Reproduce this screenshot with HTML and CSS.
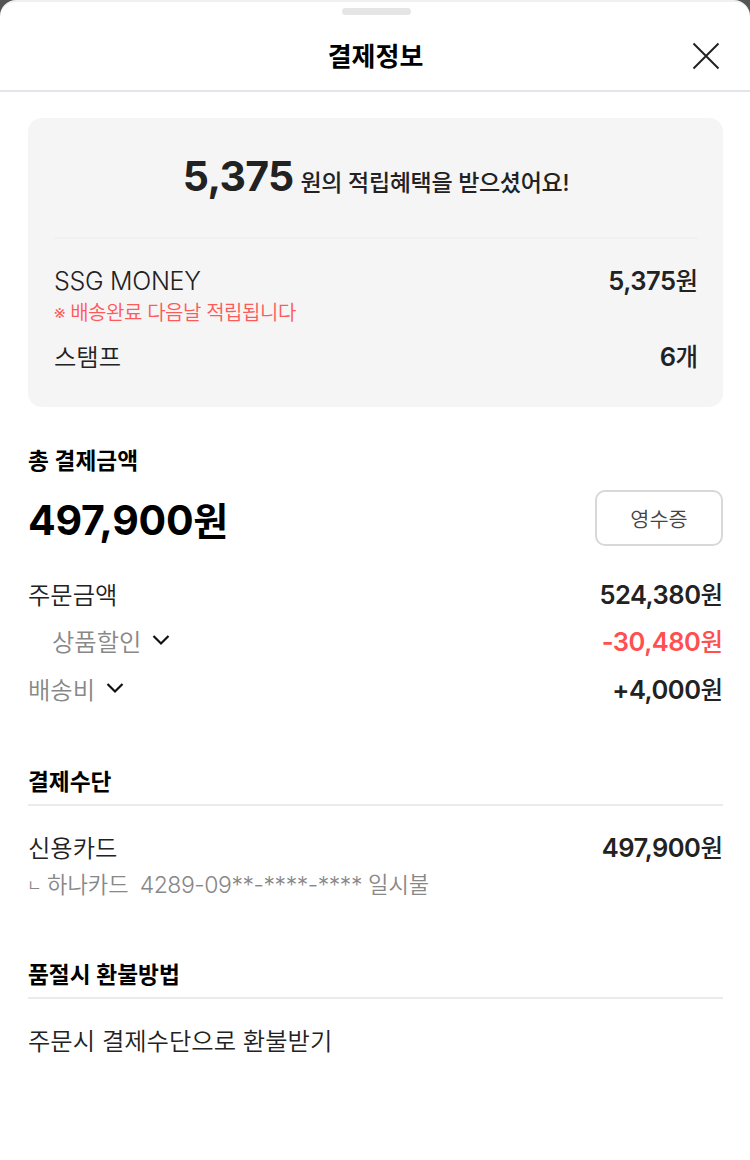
FILE: index.html
```html
<!DOCTYPE html>
<html lang="ko">
<head>
    <meta charset="UTF-8">
    <meta name="viewport" content="width=device-width, initial-scale=1.0">
    <title>결제정보</title>
    <link rel="stylesheet" href="styles.css">
</head>
<body>

<div class="sheet">
    <header class="sheet-header">
        <div class="handle"></div>
        <h1>결제정보</h1>
        <button type="button" class="close" aria-label="닫기">
            <svg width="28" height="28" viewBox="0 0 28 28" fill="none" stroke="#222" stroke-width="2">
                <path d="M1.5 1.5 26.5 26.5M26.5 1.5 1.5 26.5"/>
            </svg>
        </button>
    </header>

    <main>
        <section class="benefit">
            <p class="benefit-title"><strong>5,375</strong><span>원의 적립혜택을 받으셨어요!</span></p>
            <div class="row">
                <span class="latin">SSG MONEY</span>
                <span class="price">5,375<span class="unit">원</span></span>
            </div>
            <p class="note">※ 배송완료 다음날 적립됩니다</p>
            <div class="row">
                <span>스탬프</span>
                <span class="price">6<span class="unit">개</span></span>
            </div>
        </section>

        <section class="total">
            <h2>총 결제금액</h2>
            <div class="total-line">
                <p class="total-price">497,900<span class="unit">원</span></p>
                <button type="button" class="receipt">영수증</button>
            </div>
            <div class="row">
                <span>주문금액</span>
                <span class="price">524,380<span class="unit">원</span></span>
            </div>
            <div class="row sub indent">
                <span>상품할인
                    <svg class="arrow" width="18" height="12" viewBox="0 0 18 12" fill="none" stroke="#111" stroke-width="2.2"><path d="M1.5 2 9 9.5 16.5 2"/></svg>
                </span>
                <span class="price minus">-30,480<span class="unit">원</span></span>
            </div>
            <div class="row sub delivery">
                <span>배송비
                    <svg class="arrow" width="18" height="12" viewBox="0 0 18 12" fill="none" stroke="#111" stroke-width="2.2"><path d="M1.5 2 9 9.5 16.5 2"/></svg>
                </span>
                <span class="price">+4,000<span class="unit">원</span></span>
            </div>
        </section>

        <section class="method">
            <h2>결제수단</h2>
            <div class="row">
                <span>신용카드</span>
                <span class="price">497,900<span class="unit">원</span></span>
            </div>
            <p class="card-info"><span class="branch">ㄴ</span><span>하나카드</span><span class="card-no">4289-09**-****-****</span><span>일시불</span></p>
        </section>

        <section class="refund">
            <h2>품절시 환불방법</h2>
            <div class="row"><span>주문시 결제수단으로 환불받기</span></div>
        </section>
    </main>
</div>

</body>
</html>
```
FILE: styles.css
```css
* {
    box-sizing: border-box;
}
body, h1, h2, p {
    margin: 0;
}
body {
    background: #555;
    color: #222;
    font-family: "Inter", "Noto Sans CJK KR", sans-serif;
    font-size: 24px;
}
button {
    padding: 0;
    background: none;
    border: none;
    font-family: inherit;
}
.sheet {
    height: 1160px;
    background: #fff;
    border-top: 2px solid #f0f0f0;
    border-radius: 16px 16px 0 0;
    overflow: hidden;
}
.sheet-header {
    position: relative;
    height: 90px;
    padding-top: 6px;
    border-bottom: 2px solid #e2e5e9;
}
.handle {
    width: 69px;
    height: 7px;
    margin: 0 auto;
    border-radius: 4px;
    background: #e5e5e5;
    transform: translateX(1px);
}
h1 {
    margin-top: 22px;
    padding-left: 1px;
    color: #000;
    font-size: 26px;
    font-weight: 600;
    line-height: 40px;
    text-align: center;
}
.close {
    position: absolute;
    top: 40px;
    right: 30px;
    width: 28px;
    height: 28px;
}
.close svg {
    display: block;
}
main {
    padding: 26px 27px 0 28px;
}
.row {
    display: flex;
    justify-content: space-between;
    height: 36px;
    font-size: 24.3px;
    font-weight: 350;
    line-height: 36px;
    white-space: nowrap;
}
.latin {
    font-size: 25px;
    font-weight: 300;
    letter-spacing: -0.3px;
}
.price {
    font-size: 25.5px;
    font-weight: 600;
    letter-spacing: -0.5px;
}
.price .unit {
    font-size: 24.5px;
    font-weight: 500;
    letter-spacing: 0;
}
.minus {
    color: #ff4f4f;
}

/* 적립 혜택 */
.benefit {
    height: 289px;
    padding: 0 25px 0 26px;
    border-radius: 14px;
    background: #f5f5f5;
}
.benefit-title {
    display: flex;
    justify-content: center;
    align-items: baseline;
    gap: 7px;
    height: 121px;
    margin-bottom: 24px;
    padding-top: 34px;
    border-bottom: 2px solid #f1f1f1;
    font-size: 23px;
    font-weight: 500;
    line-height: 48px;
    letter-spacing: -0.3px;
    white-space: nowrap;
}
.benefit-title strong {
    font-size: 41px;
    font-weight: 650;
    letter-spacing: -0.7px;
}
.note {
    height: 28px;
    margin: 0 0 12px;
    color: #ff5a5a;
    font-size: 20px;
    font-weight: 350;
    line-height: 28px;
    letter-spacing: -0.45px;
}

/* 결제 금액 */
h2 {
    height: 32px;
    color: #000;
    font-size: 22.7px;
    font-weight: 600;
    line-height: 32px;
}
.total {
    height: 359px;
    padding-top: 38px;
}
.total-line {
    display: flex;
    justify-content: space-between;
    height: 56px;
    margin: 13px 0 31px;
}
.total-price {
    color: #000;
    font-size: 41px;
    font-weight: 650;
    line-height: 60px;
    letter-spacing: -0.3px;
}
.total-price .unit {
    font-size: 38px;
    font-weight: 600;
}
.receipt {
    width: 128px;
    height: 56px;
    border: 2px solid #d8d8d8;
    border-radius: 10px;
    color: #444;
    font-size: 20.8px;
    font-weight: 350;
}
.total .row {
    margin-bottom: 11px;
}
.sub {
    color: #888;
}
.sub .price:not(.minus) {
    color: #222;
}
.indent {
    padding-left: 24px;
}
.total .delivery {
    margin-top: 12px;
}
.arrow {
    margin-left: 4px;
    vertical-align: 5px;
}

/* 결제 수단, 환불 방법 */
.method h2, .refund h2 {
    height: 40px;
    border-bottom: 2px solid #ebebeb;
    margin-bottom: 24px;
}
.method {
    height: 193px;
}
.card-info {
    display: flex;
    align-items: baseline;
    color: #888;
    font-size: 22.2px;
    font-weight: 350;
    line-height: 38px;
    white-space: nowrap;
}
.branch {
    width: 19px;
    font-size: 16px;
    transform: translate(-1px, -2px);
}
.card-no {
    margin: 0 6px 0 11px;
    font-size: 23px;
    letter-spacing: -0.45px;
}
```
